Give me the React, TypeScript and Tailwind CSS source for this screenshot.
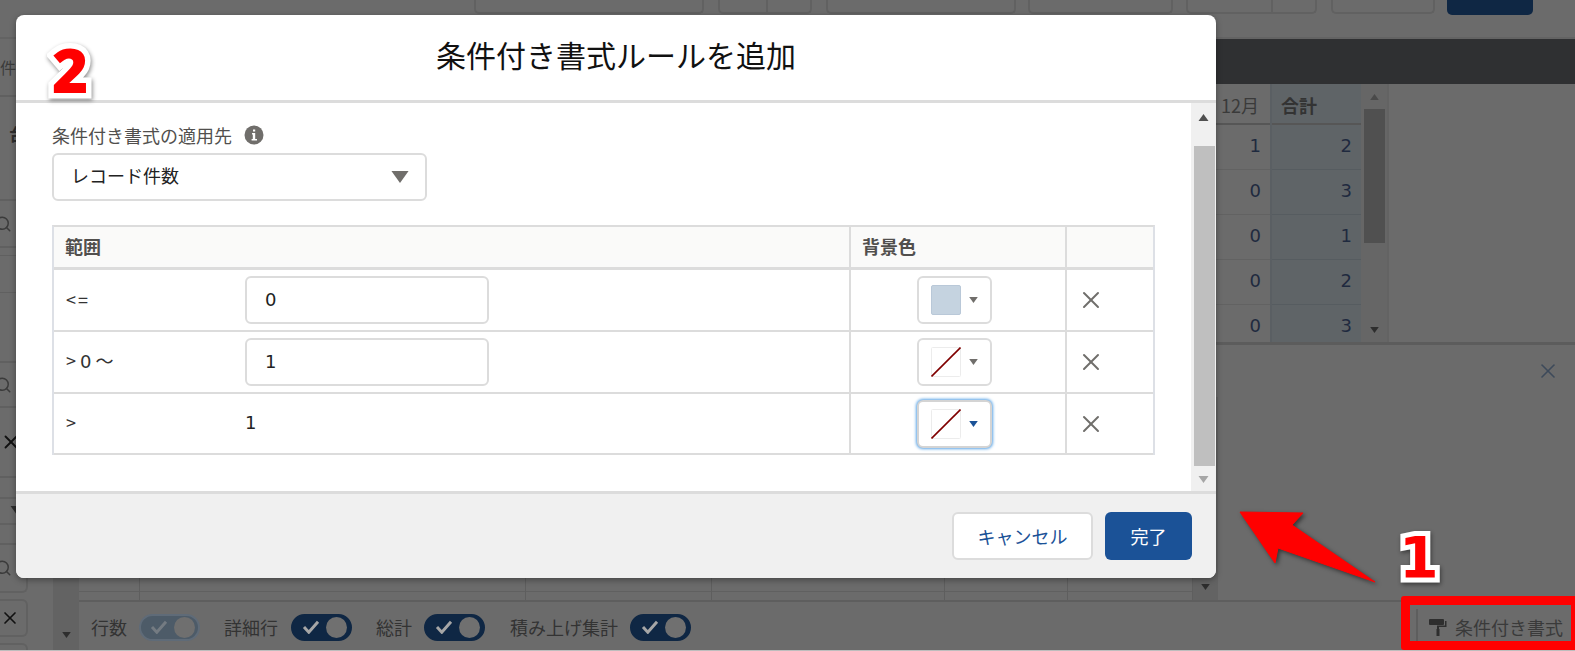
import React from 'react'
import { Search, X } from 'lucide-react'

const font = '[font-family:"Noto_Sans_CJK_JP","Noto_Sans",sans-serif]'
const digits = '[font-family:"DejaVu_Sans","Noto_Sans_CJK_JP",sans-serif]'

const toolbarButtons = [
  { left: 474, width: 230 },
  { left: 14, width: 94, divider: 48 },
  { left: 14, width: 190 },
  { left: 12, width: 145 },
  { left: 13, width: 131, divider: 85 },
  { left: 14, width: 104 },
]

const monthRows = [
  ['1', '2'],
  ['0', '3'],
  ['0', '1'],
  ['0', '2'],
  ['0', '3'],
]

const lowerColumns = [61, 386, 186, 233, 123, 125]

const Caret = ({ className }: { className: string }) => (
  <svg viewBox="0 0 10 7" className={className} fill="currentColor">
    <path d="M0 0h10L5 7z" />
  </svg>
)

const CaretUp = ({ className }: { className: string }) => (
  <svg viewBox="0 0 10 7" className={className} fill="currentColor">
    <path d="M0 7h10L5 0z" />
  </svg>
)

const Toggle = ({ muted }: { muted?: boolean }) => (
  <div
    className={`flex h-[27px] w-[61px] items-center justify-between rounded-full border-2 pl-[9px] pr-[3px] ${
      muted ? 'border-[#5f6b78] bg-[#4d5b68]' : 'border-[#0f2744] bg-[#0f2744]'
    }`}
  >
    <svg viewBox="0 0 20 16" className={`h-[14px] w-[18px] ${muted ? 'text-[#747b82]' : 'text-[#a6a6a6]'}`} fill="none" stroke="currentColor" strokeWidth="3.4">
      <path d="M2 8l5.5 6L18 2" />
    </svg>
    <div className={`h-[21px] w-[21px] rounded-full ${muted ? 'bg-[#6f6f6f]' : 'bg-[#707070]'}`} />
  </div>
)

const SwatchButton = ({ filled, focused }: { filled?: boolean; focused?: boolean }) => (
  <div
    className={`flex h-[48px] w-[75px] items-center gap-[8px] rounded-[6px] border-2 bg-white pl-[12px] ${
      focused ? 'border-[#d4d4d4] shadow-[0_0_3px_1px_#5ba4e6]' : 'border-[#dcdcdc]'
    }`}
  >
    {filled ? (
      <div className="h-[30px] w-[30px] rounded-[2px] border border-[#b9c8d8] bg-[#c5d3e0]" />
    ) : (
      <svg viewBox="0 0 30 30" className="h-[30px] w-[30px]">
        <rect x="0.5" y="0.5" width="29" height="29" rx="1" fill="#fff" stroke="#ececec" />
        <path d="M0.5 29.5L29.5 0.5" stroke="#800000" strokeWidth="1.6" />
      </svg>
    )}
    <Caret className={`h-[6px] w-[9px] ${focused ? 'text-[#1b5297]' : 'text-[#706e6b]'}`} />
  </div>
)

const RuleRow = ({ label, value, editable, filled, focused }: { label: React.ReactNode; value: string; editable?: boolean; filled?: boolean; focused?: boolean }) => (
  <>
    <div className="flex items-center border-r-2 border-b-2 border-[#dcdcdc] pl-[12px]">
      <div className="w-[179px] pb-[2px] text-[18px] text-[#333]">{label}</div>
      {editable ? (
        <div className={`flex h-[48px] w-[244px] items-center rounded-[6px] border-2 border-[#dcdcdc] pb-[2px] pl-[18px] text-[18px] text-[#222] ${digits}`}>{value}</div>
      ) : (
        <div className={`pb-[2px] text-[18px] text-[#222] ${digits}`}>{value}</div>
      )}
    </div>
    <div className="flex items-center justify-center border-r-2 border-b-2 border-[#dcdcdc] pr-[8px]">
      <SwatchButton filled={filled} focused={focused} />
    </div>
    <div className="flex items-center border-b-2 border-[#dcdcdc] pl-[10px] text-[#706e6b]">
      <X size={28} strokeWidth={2} absoluteStrokeWidth />
    </div>
  </>
)

const Modal = () => (
  <div className="absolute left-[16px] top-[15px] flex h-[563px] w-[1200px] flex-col overflow-hidden rounded-[8px] bg-white shadow-[0_2px_6px_rgba(0,0,0,0.35)]">
    <div className="flex h-[88px] shrink-0 items-start justify-center border-b-[3px] border-[#dcdcdc] pt-[15px]">
      <h2 className="text-[30px] leading-[48px] text-[#111]">条件付き書式ルールを追加</h2>
    </div>

    <div className="flex min-h-0 flex-1">
      <div className="flex-1 pl-[36px] pt-[20px]">
        <div className="flex h-[30px] items-start gap-[12px] text-[18px] leading-[24px] text-[#514f4d]">
          条件付き書式の適用先
          <svg viewBox="0 0 20 20" className="mt-[2px] h-[20px] w-[20px]">
            <circle cx="10" cy="10" r="9.5" fill="#706e6b" />
            <path d="M8 8h3.2v6H13v1.6H7.6V14h1.2V9.6H8zM9 4.4h2.2v2.2H9z" fill="#fff" />
          </svg>
        </div>
        <div className="flex h-[48px] w-[375px] items-center justify-between rounded-[6px] border-2 border-[#dcdcdc] pb-[3px] pl-[17px] pr-[15px] text-[18px] text-[#222]">
          レコード件数
          <Caret className="mt-[3px] h-[12px] w-[20px] text-[#706e6b]" />
        </div>

        <div className="mt-[24px] grid w-[1103px] grid-cols-[797px_216px_86px] grid-rows-[43px_62px_62px_61px] border-x-2 border-t-2 border-x-[#dde0e6] border-t-[#dcdcdc]">
          <div className="flex items-center border-r-2 border-b-[3px] border-[#dcdcdc] bg-[#fafaf9] pb-[2px] pl-[11px] text-[18px] font-bold text-[#514f4d]">範囲</div>
          <div className="flex items-center border-r-2 border-b-[3px] border-[#dcdcdc] bg-[#fafaf9] pb-[2px] pl-[11px] text-[18px] font-bold text-[#514f4d]">背景色</div>
          <div className="border-b-[3px] border-[#dcdcdc] bg-[#fafaf9]" />
          <RuleRow label={<span className="tracking-[2px]">&lt;=</span>} value="0" editable filled />
          <RuleRow label={<>&gt; <span className={digits}>0</span> 〜</>} value="1" editable />
          <RuleRow label=">" value="1" focused />
        </div>
      </div>

      <div className="flex w-[25px] shrink-0 flex-col items-center bg-[#f0f0f0]">
        <div className="flex h-[43px] w-full shrink-0 justify-center pt-[11px] text-[#505050]">
          <CaretUp className="h-[7px] w-[11px]" />
        </div>
        <div className="ml-[2px] w-[21px] flex-1 bg-[#bfbfbf]" />
        <div className="flex h-[25px] w-full shrink-0 items-center justify-center pt-[2px] text-[#a6a6a6]">
          <Caret className="h-[7px] w-[11px]" />
        </div>
      </div>
    </div>

    <div className="flex h-[87px] shrink-0 items-start justify-end gap-[12px] border-t-[3px] border-[#dcdcdc] bg-[#f0f0f0] pr-[24px] pt-[18px]">
      <button className="h-[48px] w-[141px] rounded-[6px] border-2 border-[#dcdcdc] bg-white text-[18px] text-[#1b5297]">キャンセル</button>
      <button className="h-[48px] w-[87px] rounded-[6px] bg-[#1b5297] text-[18px] text-white">完了</button>
    </div>
  </div>
)

const Annotations = () => (
  <>
    <span className={`absolute left-[52px] top-[34px] text-[62px] font-black leading-[70px] text-[#ff0000] [-webkit-text-stroke:11px_white] [paint-order:stroke_fill] drop-shadow-[1px_2px_2px_rgba(0,0,0,0.45)] [font-family:"Noto_Sans",sans-serif]`}>2</span>
    <span className={`absolute left-[1399px] top-[523px] text-[57px] font-bold leading-[70px] text-[#ff0000] [-webkit-text-stroke:10px_white] [paint-order:stroke_fill] drop-shadow-[1px_2px_2px_rgba(0,0,0,0.45)] [font-family:"DejaVu_Sans",sans-serif]`}>1</span>
    <svg viewBox="0 0 150 80" className="absolute left-[1235px] top-[507px] h-[80px] w-[150px] drop-shadow-[2px_2px_2px_rgba(0,0,0,0.5)]">
      <path d="M5 5L68 6L57 18L140 75L43 41L40 56z" fill="#ff0000" stroke="#ff0000" strokeLinejoin="round" />
    </svg>
    <div className="absolute left-[1401px] top-[596px] h-[54px] w-[179px] rounded-[3px] border-[9px] border-[#ff0000]" />
  </>
)

const LeftColumn = () => (
  <div className="flex w-[53px] shrink-0 flex-col text-[#3b3b3b]">
    <div className="flex h-[58px] shrink-0 items-center border-b-2 border-[#606060] text-[16px]">件</div>
    <div className="h-[104px] shrink-0 border-b-2 border-[#606060] pl-[9px] pt-[24px] text-[17px] font-bold text-[#2e2e2e]">台</div>
    <div className="flex h-[47px] shrink-0 items-center border-b-2 border-[#606060]"><Search size={18} className="-ml-[6px]" /></div>
    <div className="h-[7px] shrink-0" />
    <div className="h-[38px] shrink-0 border-y border-[#606060]" />
    <div className="h-[70px] shrink-0 border-b-2 border-[#606060]" />
    <div className="flex h-[45px] shrink-0 items-center border-b-2 border-[#606060]"><Search size={18} className="-ml-[6px]" /></div>
    <div className="flex h-[70px] shrink-0 items-center border-b-2 border-[#606060] text-[#111]"><X size={22} strokeWidth={2} /></div>
    <div className="flex h-[67px] shrink-0 items-center border-b-2 border-[#606060]">
      <div className="flex h-[28px] w-[28px] items-center justify-end rounded-r-[6px] border-2 border-l-0 border-[#616161] pr-[2px]"><Caret className="h-[9px] w-[14px] text-[#2e2e2e]" /></div>
    </div>
    <div className="flex h-[48px] w-[28px] shrink-0 items-center rounded-br-[6px] border-2 border-t-0 border-l-0 border-[#616161]"><Search size={18} className="-ml-[6px]" /></div>
    <div className="mt-[6px] flex h-[38px] w-[28px] shrink-0 items-center justify-center rounded-r-[6px] border-2 border-l-0 border-[#616161] pr-[6px] text-[#111]"><X size={22} strokeWidth={2} /></div>
    <div className="mt-[6px] h-[20px] w-[28px] shrink-0 rounded-tr-[6px] border-t-2 border-r-2 border-[#616161]" />
  </div>
)

export default function App() {
  return (
    <div className={`relative flex h-[651px] w-[1575px] flex-col overflow-hidden border-b border-[#bdbdbd] bg-[#6b6b6b] ${font}`}>
      <div className="flex h-[39px] shrink-0 items-start border-b-2 border-[#636363]">
        {toolbarButtons.map((b) => (
          <div
            key={b.left + b.width}
            className="relative h-[14px] shrink-0 rounded-b-[5px] border-2 border-t-0 border-[#616161]"
            style={{ marginLeft: b.left, width: b.width }}
          >
            {b.divider && <div className="h-full border-r-2 border-[#616161]" style={{ width: b.divider }} />}
          </div>
        ))}
        <div className="ml-[12px] h-[15px] w-[86px] shrink-0 rounded-b-[5px] bg-[#0f2744]" />
      </div>

      <div className="flex min-h-0 flex-1">
        <LeftColumn />

        <div className="flex min-w-0 flex-1 flex-col">
          <div className="h-[45px] shrink-0 bg-[#2f3032]" />

          <div className="flex h-[261px] shrink-0 overflow-hidden border-b-[3px] border-[#5c5c5c]">
            <div className="w-[1163px] shrink-0" />
            <div className="w-[56px] shrink-0 border-r-2 border-[#5a5f63]">
              <div className="flex h-[41px] items-center justify-end border-b-2 border-[#565656] pr-[11px] pt-[3px] text-[18px] text-[#3a3a3a]">12月</div>
              {monthRows.map(([m], i) => (
                <div key={i} className={`flex h-[45px] items-center justify-end border-b border-[#626262] pb-[3px] pr-[9px] text-[18px] text-[#1f2a3f] ${digits}`}>{m}</div>
              ))}
            </div>
            <div className="w-[89px] shrink-0 bg-[#5f6467]">
              <div className="flex h-[41px] items-center border-b-2 border-[#565656] pl-[9px] pt-[3px] text-[18px] font-bold text-[#333]">合計</div>
              {monthRows.map(([, t], i) => (
                <div key={i} className={`flex h-[45px] items-center justify-end border-b border-[#565c60] pb-[3px] pr-[9px] text-[18px] text-[#1f2a3f] ${digits}`}>{t}</div>
              ))}
            </div>
            <div className="flex w-[28px] shrink-0 flex-col items-center border-r-2 border-[#636363] bg-[#666666]">
              <div className="flex h-[25px] items-center text-[#4a4a4a]"><CaretUp className="h-[6px] w-[11px]" /></div>
              <div className="h-[134px] w-[21px] bg-[#505050]" />
              <div className="flex flex-1 items-end pb-[9px] text-[#2e2e2e]"><Caret className="h-[6px] w-[11px]" /></div>
            </div>
          </div>

          <div className="flex min-h-0 flex-1">
            <div className="flex w-[26px] shrink-0 flex-col items-center justify-end bg-[#636363] pb-[12px] text-[#2e2e2e]">
              <Caret className="h-[6px] w-[11px]" />
            </div>
            <div className="flex min-w-0 flex-1 flex-col">
              <div className="flex h-[52px] shrink-0 items-center justify-end pr-[15px] text-[#3d4a5a]">
                <X size={24} strokeWidth={1.6} absoluteStrokeWidth />
              </div>
              <div className="flex min-h-0 flex-1">
                <div className="flex w-[1114px] shrink-0">
                  {lowerColumns.map((w) => (
                    <div key={w} className="flex shrink-0 flex-col border-r border-[#5e5e5e]" style={{ width: w }}>
                      <div className="flex-1 border-b border-[#606060]" />
                      <div className="h-[8px]" />
                    </div>
                  ))}
                </div>
                <div className="flex w-[25px] shrink-0 flex-col items-center justify-end bg-[#636363] pb-[10px] text-[#2e2e2e]">
                  <Caret className="h-[6px] w-[11px]" />
                </div>
              </div>
              <div className="flex h-[50px] shrink-0 items-center border-t-2 border-t-[#5e5e5e] pt-[2px] text-[18px] text-[#333]">
                <span className="ml-[12px]">行数</span>
                <div className="ml-[12px]"><Toggle muted /></div>
                <span className="ml-[24px]">詳細行</span>
                <div className="ml-[13px]"><Toggle /></div>
                <span className="ml-[24px]">総計</span>
                <div className="ml-[12px]"><Toggle /></div>
                <span className="ml-[25px]">積み上げ集計</span>
                <div className="ml-[12px]"><Toggle /></div>
                <div className="ml-auto flex h-[36px] items-center gap-[8px] border-l-2 border-[#5e5e5e] pl-[11px] pr-[12px] text-[#3a3a3a]">
                  <svg viewBox="0 0 18 17" className="h-[17px] w-[18px]" fill="#2e2e2e">
                    <path d="M0 1a1 1 0 011-1h13a1 1 0 011 1v4a1 1 0 01-1 1H1a1 1 0 01-1-1zM16 2h1.5v6H10v2H8V6.6h8z" />
                    <path d="M7.5 10h3v7h-3z" />
                  </svg>
                  条件付き書式
                </div>
              </div>
            </div>
          </div>
        </div>
      </div>

      <Modal />
      <Annotations />
    </div>
  )
}
